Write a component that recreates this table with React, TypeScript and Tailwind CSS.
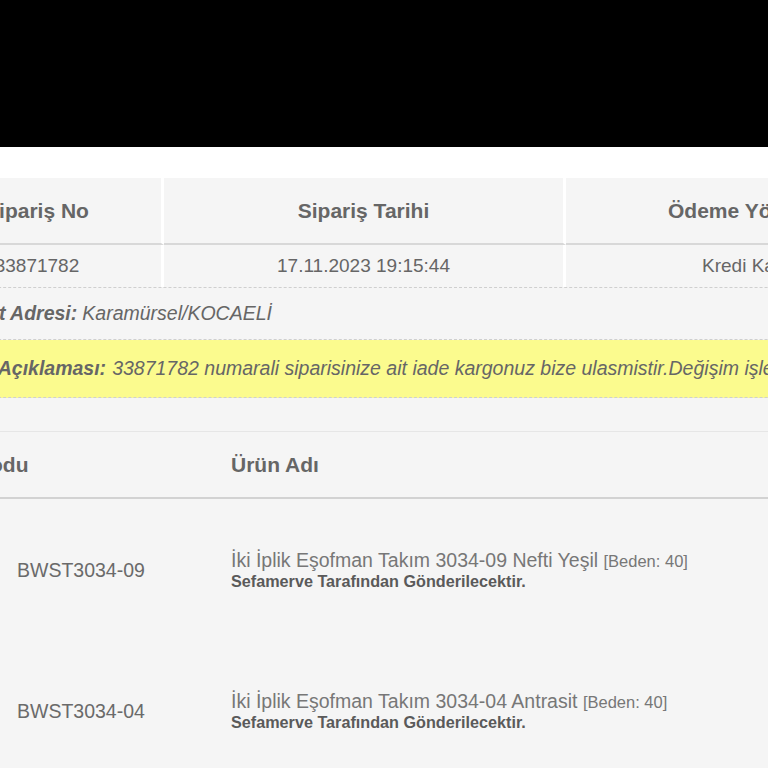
import React from 'react';

type Urun = {
  kod: string;
  ad: string;
  beden: string;
};

const urunler: Urun[] = [
  { kod: 'BWST3034-09', ad: 'İki İplik Eşofman Takım 3034-09 Nefti Yeşil', beden: '40' },
  { kod: 'BWST3034-04', ad: 'İki İplik Eşofman Takım 3034-04 Antrasit', beden: '40' },
];

export default function App() {
  return (
    <div className="w-[768px] h-[768px] overflow-hidden bg-white font-['Liberation_Sans',Arial,sans-serif] text-[#666]">
      {/* ust siyah bant */}
      <div className="h-[147px] bg-black" />
      <div className="h-[31px] bg-white" />

      <div className="ml-[-87px] w-[1100px] bg-[#f5f5f5]">
        {/* SIPARIS BILGILERI */}
        <div className="grid grid-cols-[251px_402px_447px]">
          <div className="h-[67px] flex items-center justify-center border-r-[3px] border-b-2 border-r-white border-b-[#d8d8d8] text-[21px] font-bold">
            Sipariş No
          </div>
          <div className="h-[67px] flex items-center justify-center border-r-[3px] border-b-2 border-r-white border-b-[#d8d8d8] text-[21px] font-bold">
            Sipariş Tarihi
          </div>
          <div className="h-[67px] flex items-center justify-start pl-[102px] border-b-2 border-b-[#d8d8d8] text-[21px] font-bold">
            Ödeme Yöntemi
          </div>

          <div className="h-[42px] flex items-center justify-center border-r-[3px] border-white text-[19px]">
            33871782
          </div>
          <div className="h-[42px] flex items-center justify-center border-r-[3px] border-white text-[19px]">
            17.11.2023 19:15:44
          </div>
          <div className="h-[42px] flex items-center justify-start pl-[136px] text-[19px]">
            Kredi Kartı ile
          </div>
        </div>

        {/* ADRES */}
        <div className="h-[53px] flex items-center pl-[14px] border-y border-dashed border-[#cfcfcf] text-[19.5px] italic whitespace-nowrap">
          <span className="font-bold mr-[5px]">Teslimat Adresi:</span>
          <span>Karamürsel/KOCAELİ</span>
        </div>

        {/* ACIKLAMA */}
        <div className="h-[58px] flex items-center pl-[15px] bg-[#fbfb8e] border-b border-dashed border-[#cfcfcf] text-[19.5px] italic whitespace-nowrap">
          <span className="font-bold mr-[6px]">Sipariş Açıklaması:</span>
          <span>33871782 numarali siparisinize ait iade kargonuz bize ulasmistir.Değişim işlemi yapılmıştır.</span>
        </div>

        <div className="h-[33px]" />

        {/* URUNLER */}
        <div className="border-t border-[#e6e6e6]">
          <div className="h-[67px] grid grid-cols-[318px_1fr] items-center border-b-2 border-[#d2d2d2] text-[21px] font-bold">
            <div className="pl-[7px]">Ürün Kodu</div>
            <div>Ürün Adı</div>
          </div>

          {urunler.map((u) => (
            <div key={u.kod} className="h-[141px] grid grid-cols-[318px_1fr] items-center">
              <div className="pl-[104px] pt-[2px] text-[19.5px] text-[#6a6a6a]">{u.kod}</div>
              <div>
                <p className="text-[19.5px] leading-[21px] text-[#777]">
                  {u.ad} <span className="text-[16.5px]">[Beden: {u.beden}]</span>
                </p>
                <p className="text-[16.2px] leading-[18px] font-bold text-[#5a5a5a]">
                  Sefamerve Tarafından Gönderilecektir.
                </p>
              </div>
            </div>
          ))}
        </div>
      </div>
    </div>
  );
}
